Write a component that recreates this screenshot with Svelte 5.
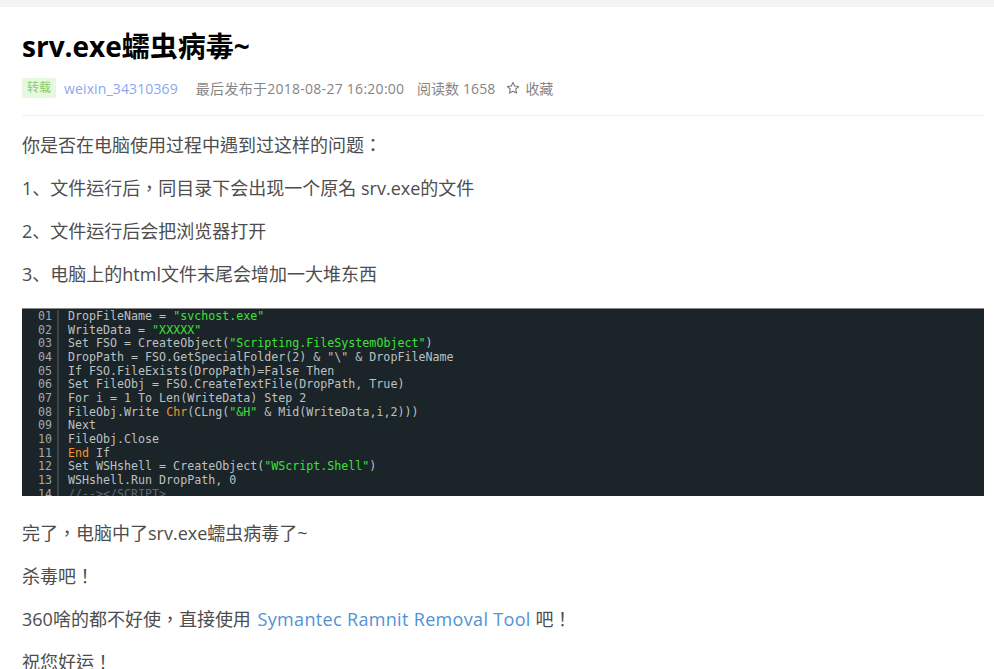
<script>
	const lines = [
		[['DropFileName = '], ['"svchost.exe"', 'str']],
		[['WriteData = '], ['"XXXXX"', 'str']],
		[['Set FSO = CreateObject('], ['"Scripting.FileSystemObject"', 'str'], [')']],
		[['DropPath = FSO.GetSpecialFolder(2) & "\\" & DropFileName']],
		[['If FSO.FileExists(DropPath)=False Then']],
		[['Set FileObj = FSO.CreateTextFile(DropPath, True)']],
		[['For i = 1 To Len(WriteData) Step 2']],
		[['FileObj.Write '], ['Chr', 'kw'], ['(CLng('], ['"&H"', 'str'], [' & Mid(WriteData,i,2)))']],
		[['Next']],
		[['FileObj.Close']],
		[['End', 'kw'], [' If']],
		[['Set WSHshell = CreateObject('], ['"WScript.Shell"', 'str'], [')']],
		[['WSHshell.Run DropPath, 0']],
		[['//--></SCRIPT>', 'dim']]
	];
	const num = (i) => String(i + 1).padStart(2, '0');
</script>

<div class="topbar"></div>
<article class="post">
	<h1>srv.exe蠕虫病毒~</h1>
	<div class="meta">
		<span class="tag">转载</span>
		<a class="author" href="#author">weixin_34310369</a>
		<span class="date">最后发布于2018-08-27 16:20:00</span>
		<span class="views">阅读数 1658</span>
		<span class="fav">
			<svg width="14" height="14" viewBox="0 0 14 14" aria-hidden="true">
				<path d="M7 1.4l1.700 3.600 3.900.5-2.900 2.700.8 3.900L7 10.200l-3.500 1.900.8-3.900L1.400 5.500l3.900-.5z" fill="none" stroke="#777" stroke-width="1.100" stroke-linejoin="round" />
			</svg>
			收藏
		</span>
	</div>

	<p>你是否在电脑使用过程中遇到过这样的问题：</p>
	<p>1<span class="sc">、</span>文件运行后，同目录下会出现一个原名 srv.exe的文件</p>
	<p>2<span class="sc">、</span>文件运行后会把浏览器打开</p>
	<p>3<span class="sc">、</span>电脑上的html文件末尾会增加一大堆东西</p>

	<div class="code">
		{#each lines as line, i}
			<div class="row">
				<span class="num">{num(i)}</span>
				<span class="src">{#each line as part}<span class={part[1]}>{part[0]}</span>{/each}</span>
			</div>
		{/each}
	</div>

	<p>完了，电脑中了srv.exe蠕虫病毒了~</p>
	<p>杀毒吧！</p>
	<p>360啥的都不好使，直接使用 <a href="#tool">Symantec Ramnit Removal Tool</a> 吧！</p>
	<p>祝您好运！</p>
</article>

<style>
	:global(body) {
		background: #fff;
		overflow: hidden;
	}

	.topbar {
		height: 7px;
		background: #f3f4f6;
	}

	.post {
		padding: 0 10px 0 22px;
		font-family: "Open Sans", "Noto Sans CJK TC", sans-serif;
	}

	h1 {
		margin: 0;
		padding-top: 19px;
		font-size: 28px;
		line-height: 40px;
		font-weight: 700;
		color: #000;
	}

	.meta {
		display: flex;
		align-items: center;
		height: 22px;
		margin-top: 11px;
		padding-bottom: 16px;
		border-bottom: 1px solid #f0f0f2;
		font-size: 14px;
		color: #858585;
	}

	.tag {
		padding: 0 5px;
		margin-right: 8px;
		font-size: 12px;
		line-height: 20px;
		color: #86cc6c;
		background: #e6f8de;
		border-radius: 2px;
	}

	.author {
		margin-right: 18px;
		color: #8ca8f0;
		letter-spacing: 0.13px;
		text-decoration: none;
	}

	.date {
		margin-right: 12.500px;
		letter-spacing: 0.27px;
	}

	.views {
		margin-right: 11px;
		letter-spacing: 0.1px;
	}

	.fav {
		display: flex;
		align-items: center;
		gap: 5px;
	}

	p {
		margin: 0 0 16px;
		font-size: 18px;
		line-height: 27px;
		color: #4d4d4d;
	}

	.meta + p {
		margin-top: 16px;
	}

	p a {
		margin-left: 2px;
		color: #5093d8;
		letter-spacing: 0.33px;
		text-decoration: none;
	}

	.sc {
		font-family: "Noto Sans CJK SC", sans-serif;
		line-height: 0;
	}

	.code {
		box-sizing: border-box;
		height: 188px;
		margin: 20px 0 24px;
		padding-top: 1px;
		overflow: hidden;
		background: #1b2428;
		border-top: 1px solid #888;
		font-family: "DejaVu Sans Mono", monospace;
		font-size: 11.65px;
		line-height: 13.65px;
		color: #bcc1c2;
	}

	.row {
		display: flex;
		white-space: pre;
	}

	.num {
		box-sizing: border-box;
		width: 37px;
		padding-right: 5px;
		text-align: right;
		border-right: 2px solid #3a4549;
		margin-right: 9px;
		color: #a4aaac;
	}

	.str {
		color: #3ee038;
	}

	.kw {
		color: #f59233;
	}

	.dim {
		color: #5f686b;
	}
</style>
